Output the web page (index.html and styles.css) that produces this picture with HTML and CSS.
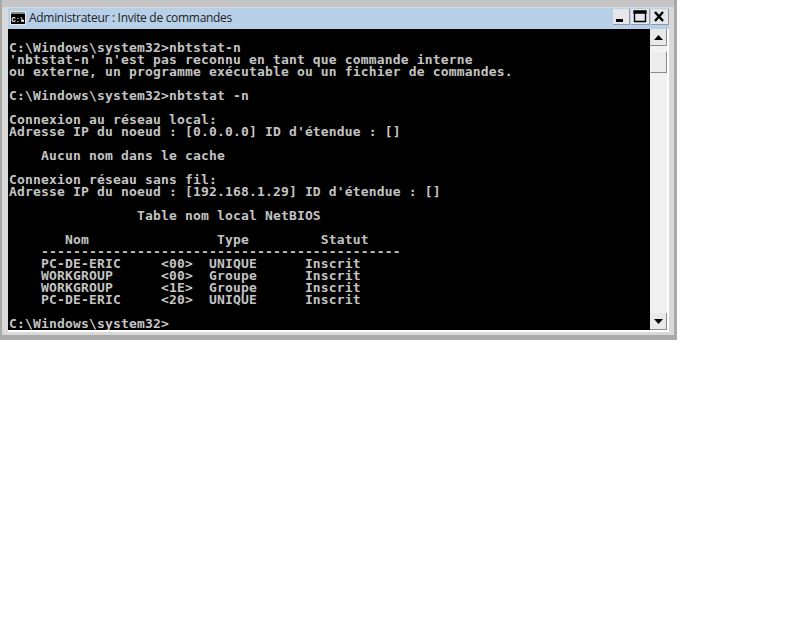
FILE: index.html
```html
<!DOCTYPE html>
<html lang="fr">
<head>
<meta charset="utf-8">
<title>Administrateur : Invite de commandes</title>
<link rel="stylesheet" href="styles.css">
</head>
<body>
<div class="window">
  <div class="frame">
    <div class="titlebar">
      <svg class="app-icon" width="16" height="14" viewBox="0 0 16 14"><rect x="0" y="0" width="16" height="14" fill="#e8e8e8"/><rect x="1" y="1" width="14" height="12" fill="#000"/><rect x="1" y="1" width="14" height="2" fill="#8a8a8a"/><text x="1.5" y="10.500" class="icon-text">C:\</text><rect x="11" y="9" width="3" height="1.500" fill="#fff"/></svg>
      <span class="title">Administrateur : Invite de commandes</span>
      <div class="buttons">
        <div class="btn"><svg width="16" height="15" viewBox="0 0 16 15"><rect x="3" y="10" width="7" height="3" fill="#000"/></svg></div>
        <div class="btn"><svg width="18" height="15" viewBox="0 0 18 15"><path d="M3.5 2.5h11v10h-11z M3 2h12v2H3z" fill="none" stroke="#000" stroke-width="1.4"/></svg></div>
        <div class="btn"><svg width="17" height="15" viewBox="0 0 17 15"><path d="M4 3l8 9M12 3l-8 9" stroke="#000" stroke-width="2.4"/></svg></div>
      </div>
    </div>
    <div class="body">
      <pre class="console">

C:\Windows\system32&gt;nbtstat-n
'nbtstat-n' n'est pas reconnu en tant que commande interne
ou externe, un programme exécutable ou un fichier de commandes.

C:\Windows\system32&gt;nbtstat -n

Connexion au réseau local:
Adresse IP du noeud : [0.0.0.0] ID d'étendue : []

    Aucun nom dans le cache

Connexion réseau sans fil:
Adresse IP du noeud : [192.168.1.29] ID d'étendue : []

                Table nom local NetBIOS

       Nom                Type         Statut
    ---------------------------------------------
    PC-DE-ERIC     &lt;00&gt;  UNIQUE      Inscrit
    WORKGROUP      &lt;00&gt;  Groupe      Inscrit
    WORKGROUP      &lt;1E&gt;  Groupe      Inscrit
    PC-DE-ERIC     &lt;20&gt;  UNIQUE      Inscrit

C:\Windows\system32&gt;</pre>
      <div class="scrollbar">
        <div class="arrow"><svg width="9" height="5" viewBox="0 0 9 5"><path d="M4.500 0L9 5H0z" fill="#000"/></svg></div>
        <div class="thumb"></div>
        <div class="track"></div>
        <div class="arrow arrow-down"><svg width="9" height="5" viewBox="0 0 9 5"><path d="M0 0h9L4.500 5z" fill="#000"/></svg></div>
      </div>
    </div>
  </div>
</div>
</body>
</html>
```

FILE: styles.css
```css
html, body {
  margin: 0;
  padding: 0;
  background: #fff;
}
.window {
  width: 677px;
  height: 340px;
  box-sizing: border-box;
  background: #a9a9a9;
  padding: 0 3px 5px 2px;
}
.frame {
  height: 100%;
  box-sizing: border-box;
  background: #d9d9d9;
  border-top: 7px solid #c4c4c4;
  padding: 1px 5px 3px 6px;
  display: flex;
  flex-direction: column;
}
.titlebar {
  height: 21px;
  flex: none;
  box-sizing: border-box;
  display: flex;
  align-items: center;
  background: #b7d0e8;
  padding: 0 0 2px 1px;
}
.app-icon {
  flex: none;
  margin-left: 1px;
}
.icon-text {
  font: bold 7px "Liberation Mono", monospace;
  fill: #fff;
}
.title {
  font: 12px "Open Sans", sans-serif;
  letter-spacing: -0.3px;
  color: #222;
  margin-left: 3px;
  white-space: nowrap;
}
.buttons {
  margin-left: auto;
  display: flex;
  gap: 1px;
  align-self: flex-start;
  padding-top: 1px;
}
.btn {
  height: 15px;
  background: #e4e6ea;
  border-bottom: 1px solid #8f9aa6;
  border-right: 1px solid #8f9aa6;
  display: flex;
}
.body {
  flex: 1;
  min-height: 0;
  display: flex;
  border-right: 2px solid #fff;
  border-bottom: 2px solid #fff;
}
.console {
  flex: 1;
  min-width: 0;
  margin: 0;
  padding: 1px 0 0 1px;
  background: #000;
  color: #c4c4c4;
  font: bold 13px/12px "DejaVu Sans Mono", monospace;
  letter-spacing: 0.17px;
  overflow: hidden;
}
.scrollbar {
  width: 17px;
  flex: none;
  display: flex;
  flex-direction: column;
  background: #f1f1f1;
}
.arrow {
  height: 17px;
  flex: none;
  box-sizing: border-box;
  background: #e9e9e9;
  border-right: 1px solid #8c8c8c;
  border-bottom: 1px solid #8c8c8c;
  display: flex;
  align-items: center;
  justify-content: center;
}
.thumb {
  height: 22px;
  flex: none;
  margin-top: 5px;
  box-sizing: border-box;
  background: #ececec;
  border: 1px solid #f8f8f8;
  border-right-color: #8c8c8c;
  border-bottom-color: #8c8c8c;
}
.track {
  flex: 1;
}
```
